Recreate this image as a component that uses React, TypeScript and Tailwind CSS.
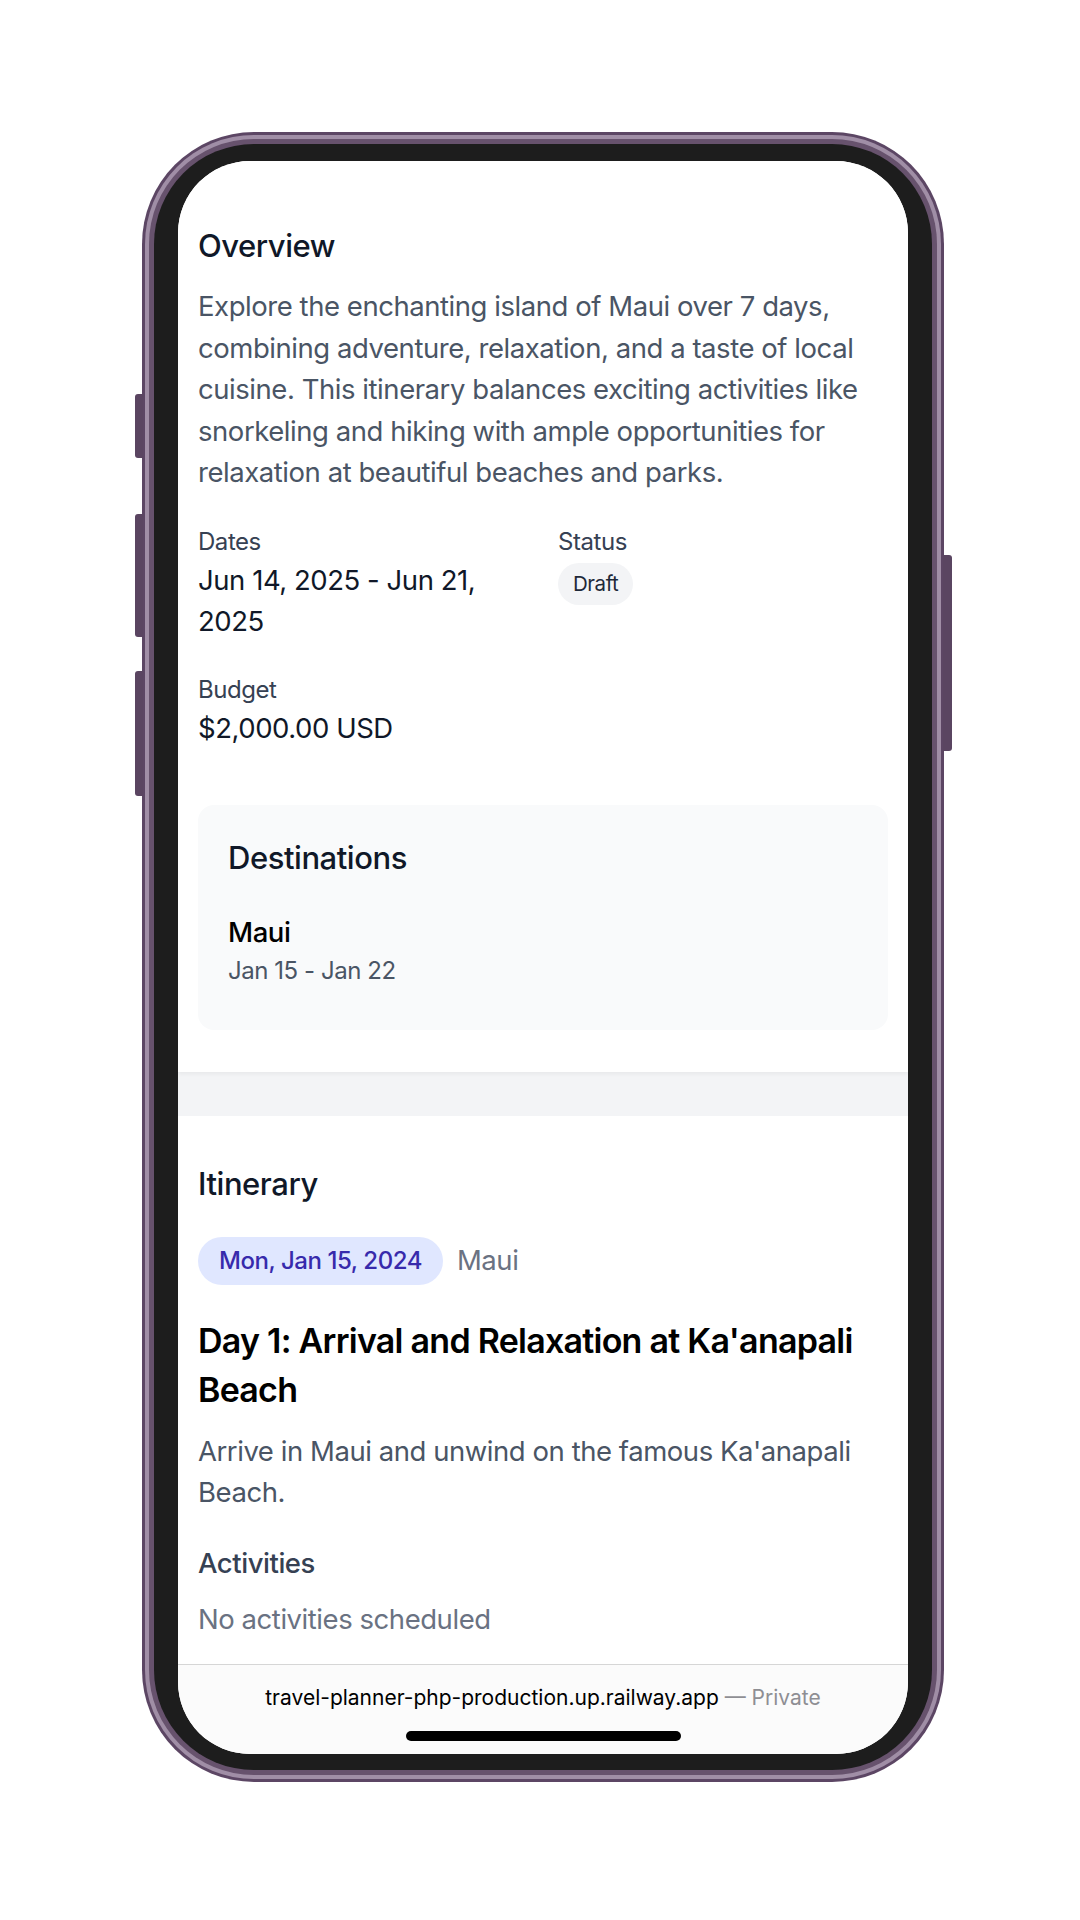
import React from "react";

const body = "text-[27.5px] leading-[41.5px]";

function SideButtons() {
  return (
    <>
      {/* left: action + volume buttons */}
      <div className="absolute left-[-7px] top-[262px] h-[64px] w-[8px] rounded-l-[3px] bg-[#5a4561]" />
      <div className="absolute left-[-7px] top-[382px] h-[123px] w-[8px] rounded-l-[3px] bg-[#5a4561]" />
      <div className="absolute left-[-7px] top-[539px] h-[125px] w-[8px] rounded-l-[3px] bg-[#5a4561]" />
      {/* right: power */}
      <div className="absolute right-[-8px] top-[423px] h-[196px] w-[9px] rounded-r-[3px] bg-[#5a4561]" />
    </>
  );
}

function Field({ label, children }: { label: string; children: React.ReactNode }) {
  return (
    <div>
      <div className="text-[24px] leading-[34.4px] text-gray-700">{label}</div>
      <div className="mt-[1px]">{children}</div>
    </div>
  );
}

export default function App() {
  return (
    <div className="min-h-[1920px] bg-white pl-[142px] pt-[132px] font-['Inter','Liberation_Sans',sans-serif] tracking-[-0.45px]">
      <div className="relative w-fit rounded-[112px] bg-[#5c4664] p-[3px]">
        <SideButtons />
        <div className="rounded-[109px] bg-[#a08ea6] p-[4px]">
          <div className="rounded-[105px] bg-[#67526d] p-[5px]">
            <div className="rounded-[100px] bg-[#1d1d1d] px-[24px] pt-[17px] pb-[16px]">
              <div className="flex h-[1593px] w-[730px] flex-col overflow-hidden rounded-[72px] bg-white">
                <div className="flex-1 overflow-hidden">
                  {/* Overview */}
                  <section className="relative bg-white px-[20px] pt-[61px] pb-[42px] shadow-[0_2px_4px_rgba(0,0,0,0.05)]">
                    <h2 className="text-[31px] font-medium leading-[48px] text-gray-900">Overview</h2>
                    <p className={`mt-[16px] ${body} text-gray-600`}>
                      Explore the enchanting island of Maui over 7 days, combining adventure, relaxation, and a
                      taste of local cuisine. This itinerary balances exciting activities like snorkeling and hiking
                      with ample opportunities for relaxation at beautiful beaches and parks.
                    </p>

                    <div className="mt-[31px] grid grid-cols-2 gap-[30px]">
                      <Field label="Dates">
                        <div className="text-[27.5px] leading-[41.3px] text-gray-900">
                          Jun 14, 2025 - Jun 21, 2025
                        </div>
                      </Field>
                      <Field label="Status">
                        <span className="mt-[3px] inline-block rounded-full bg-gray-100 px-[15px] py-[7px] text-[20.5px] leading-[28px] text-gray-800">
                          Draft
                        </span>
                      </Field>
                      <Field label="Budget">
                        <div className="text-[27.5px] leading-[41.3px] text-gray-900">$2,000.00 USD</div>
                      </Field>
                    </div>

                    <div className="mt-[56px] rounded-[16px] bg-gray-50 px-[30px] pt-[29px] pb-[42px]">
                      <h3 className="text-[31px] font-medium leading-[48px] text-gray-900">Destinations</h3>
                      <div className="mt-[30px]">
                        <div className="text-[27.5px] font-medium leading-[41.3px] text-black">Maui</div>
                        <div className="text-[24px] leading-[34.4px] text-gray-600">Jan 15 - Jan 22</div>
                      </div>
                    </div>
                  </section>

                  <div className="h-[44px] bg-gray-100" />

                  {/* Itinerary */}
                  <section className="bg-white px-[20px] pt-[44px]">
                    <h2 className="text-[31px] font-medium leading-[48px] text-gray-900">Itinerary</h2>
                    <div className="mt-[29px] flex items-center gap-[14px]">
                      <span className="rounded-full bg-indigo-100 px-[21px] py-[7px] text-[24px] font-medium leading-[34.4px] text-indigo-800">
                        Mon, Jan 15, 2024
                      </span>
                      <span className="text-[27.5px] leading-[41.3px] text-gray-500">Maui</span>
                    </div>
                    <h3 className="mt-[32px] text-[34px] font-semibold leading-[48.2px] tracking-[-0.75px] text-black">
                      Day 1: Arrival and Relaxation at Ka'anapali Beach
                    </h3>
                    <p className={`mt-[17px] ${body} text-gray-600`}>
                      Arrive in Maui and unwind on the famous Ka'anapali Beach.
                    </p>
                    <h4 className="mt-[29px] text-[27.5px] font-medium leading-[41.3px] text-gray-700">Activities</h4>
                    <p className="mt-[15px] text-[27.5px] leading-[41.3px] text-gray-500">No activities scheduled</p>
                  </section>
                </div>

                {/* Safari bottom bar */}
                <div className="flex h-[90px] shrink-0 flex-col items-center border-t border-[#d6d6d6] bg-[#fbfbfb]">
                  <div className="mt-[20px] text-[21px] leading-[26px] tracking-normal text-black">
                    travel-planner-php-production.up.railway.app
                    <span className="text-[#8e8e93]"> — Private</span>
                  </div>
                  <div className="mt-[20px] h-[10px] w-[275px] rounded-full bg-black" />
                </div>
              </div>
            </div>
          </div>
        </div>
      </div>
    </div>
  );
}
